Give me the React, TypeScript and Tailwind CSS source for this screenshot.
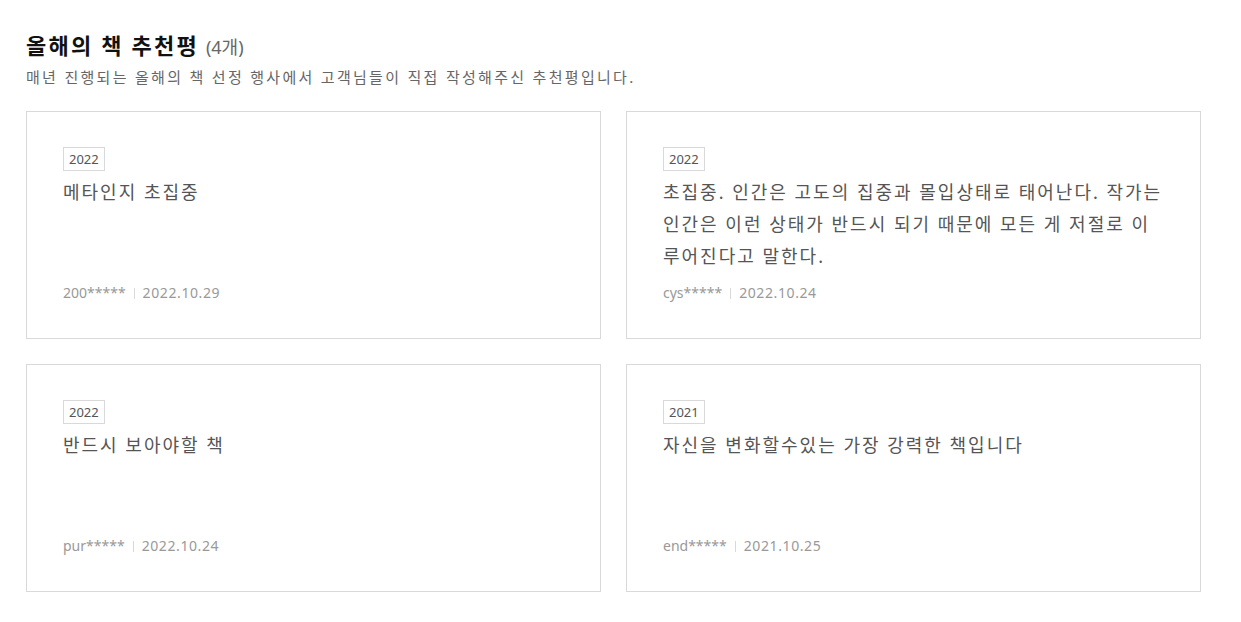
const REVIEWS = [
  { year: '2022', text: '메타인지 초집중', user: '200*****', date: '2022.10.29' },
  {
    year: '2022',
    text: '초집중. 인간은 고도의 집중과 몰입상태로 태어난다. 작가는 인간은 이런 상태가 반드시 되기 때문에 모든 게 저절로 이루어진다고 말한다.',
    user: 'cys*****',
    date: '2022.10.24',
  },
  { year: '2022', text: '반드시 보아야할 책', user: 'pur*****', date: '2022.10.24' },
  { year: '2021', text: '자신을 변화할수있는 가장 강력한 책입니다', user: 'end*****', date: '2021.10.25' },
]

export default function App() {
  return (
    <div className="min-h-screen bg-white font-['Noto_Sans','Noto_Sans_CJK_KR',sans-serif]">
      <section className="pl-[26px] pr-[40px] pt-[29px]">
        <h2 className="flex items-baseline gap-[7px] text-[22px] leading-[32px] font-bold text-[#111] tracking-[2.2px]">
          올해의 책 추천평
          <span className="text-[18px] font-normal text-[#666] tracking-normal">(4개)</span>
        </h2>
        <p className="mt-[3px] text-[15px] leading-[22px] text-[#666] tracking-[2.3px]">
          매년 진행되는 올해의 책 선정 행사에서 고객님들이 직접 작성해주신 추천평입니다.
        </p>

        <div className="mt-[23px] grid grid-cols-2 gap-x-[25px] gap-y-[25px]">
          {REVIEWS.map((r, i) => (
            <div key={i} className="border border-[#d9d9d9] px-[36px] pt-[34px] pb-[34px]">
              <span className="inline-block border border-[#d9d9d9] px-[5px] text-[13px] leading-[22px] text-[#555]">
                {r.year}
              </span>
              <p className="mt-[5px] min-h-[96px] text-[18px] leading-[32px] text-[#555] tracking-[2px]">
                {r.text}
              </p>
              <div className="mt-[10px] flex items-center text-[14px] leading-[22px] text-[#999]">
                <span>{r.user}</span>
                <span className="mx-[8px] h-[11px] w-px bg-[#d9d9d9]" />
                <span className="tracking-[0.6px]">{r.date}</span>
              </div>
            </div>
          ))}
        </div>
      </section>
    </div>
  )
}
